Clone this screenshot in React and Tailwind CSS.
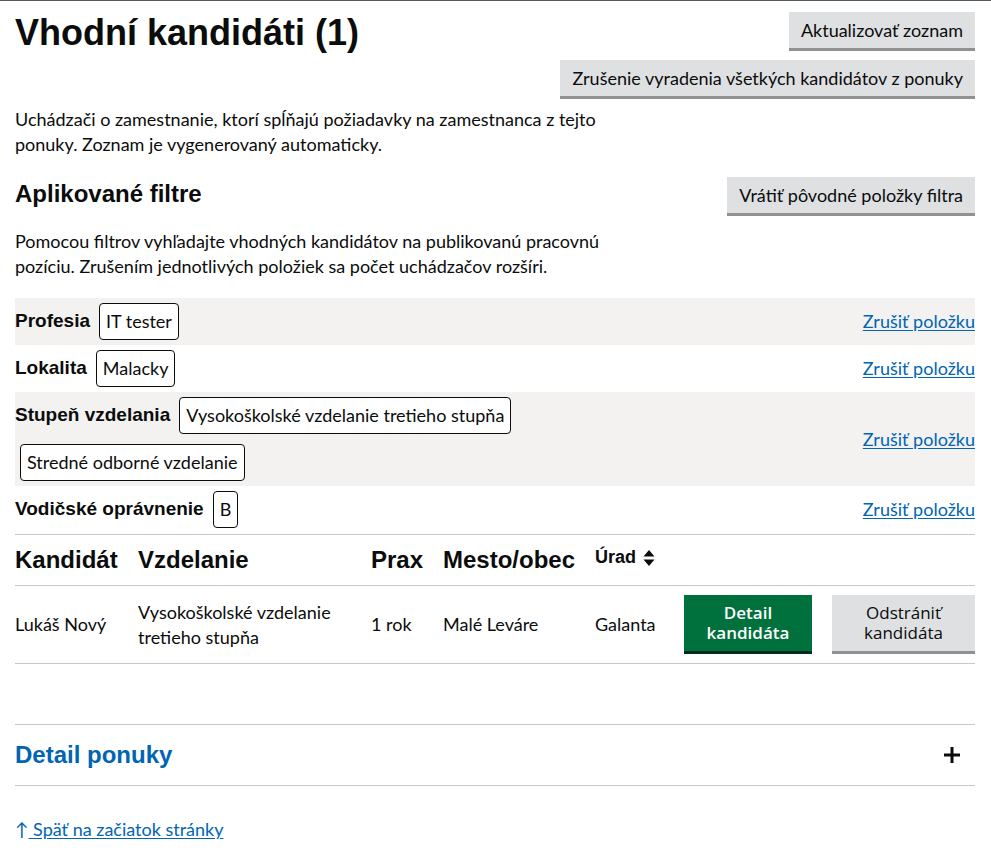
const FILTERS = [
  { label: 'Profesia', tags: ['IT tester'], shaded: true },
  { label: 'Lokalita', tags: ['Malacky'], shaded: false },
  { label: 'Stupeň vzdelania', tags: ['Vysokoškolské vzdelanie tretieho stupňa', 'Stredné odborné vzdelanie'], shaded: true },
  { label: 'Vodičské oprávnenie', tags: ['B'], shaded: false },
]

const body = "font-['Lato','Source_Sans_Pro',sans-serif]"
const head = "font-['Liberation_Sans',Arial,sans-serif]"

function GrayButton({ children, className = '' }) {
  return (
    <button className={`bg-[#dee0e2] border-b-[3px] border-[#929191] text-[#0b0c0c] text-[18px] leading-[22px] ${body} ${className}`}>
      {children}
    </button>
  )
}

export default function App() {
  return (
    <div className="min-h-screen bg-white border-t border-[#505a5f] text-[#0b0c0c]">
      <div className="pl-[15px] pr-[16px]">
        {/* Title + actions */}
        <div className="flex justify-between items-start">
          <h1 className={`${head} font-bold text-[36px] leading-[44px] pt-[10px]`}>Vhodní kandidáti (1)</h1>
          <div className="flex flex-col items-end gap-[9px] pt-[11px]">
            <GrayButton className="px-[12px] h-[39px]">Aktualizovať zoznam</GrayButton>
            <GrayButton className="px-[12px] h-[39px]">Zrušenie vyradenia všetkých kandidátov z ponuky</GrayButton>
          </div>
        </div>

        <p className={`${body} text-[18px] leading-[25px] max-w-[620px] mt-[8px]`}>
          Uchádzači o zamestnanie, ktorí spĺňajú požiadavky na zamestnanca z tejto ponuky. Zoznam je vygenerovaný automaticky.
        </p>

        {/* Applied filters */}
        <div className="flex justify-between items-start mt-[20px]">
          <h2 className={`${head} font-bold text-[24px] leading-[30px] pt-[2px]`}>Aplikované filtre</h2>
          <GrayButton className="px-[12px] h-[39px]">Vrátiť pôvodné položky filtra</GrayButton>
        </div>

        <p className={`${body} text-[18px] leading-[25px] max-w-[620px] mt-[13px]`}>
          Pomocou filtrov vyhľadajte vhodných kandidátov na publikovanú pracovnú pozíciu. Zrušením jednotlivých položiek sa počet uchádzačov rozšíri.
        </p>

        <div className="mt-[19px]">
          {FILTERS.map(f => (
            <div key={f.label} className={`flex items-center justify-between py-[5px] ${f.shaded ? 'bg-[#f3f2f1]' : ''}`}>
              <div className="flex flex-wrap items-center gap-y-[10px] max-w-[640px]">
                <span className={`${head} font-bold text-[19px] mr-[4px]`}>{f.label}</span>
                {f.tags.map(t => (
                  <span key={t} className={`${body} text-[18px] leading-[23px] border border-[#0b0c0c] rounded-[4px] px-[6px] py-[6px] ml-[5px] bg-white`}>
                    {t}
                  </span>
                ))}
              </div>
              <a href="#" className={`${body} text-[18px] text-[#0065b3] underline underline-offset-2`}>Zrušiť položku</a>
            </div>
          ))}
        </div>

        {/* Candidates table */}
        <div className="grid grid-cols-[123px_233px_72px_152px_89px_148px_143px] border-t border-b border-[#c8c8c8] mt-[1px]">
          <div className={`${head} font-bold text-[24px] h-[50px] flex items-center`}>Kandidát</div>
          <div className={`${head} font-bold text-[24px] h-[50px] flex items-center`}>Vzdelanie</div>
          <div className={`${head} font-bold text-[24px] h-[50px] flex items-center`}>Prax</div>
          <div className={`${head} font-bold text-[24px] h-[50px] flex items-center`}>Mesto/obec</div>
          <div className={`${head} font-bold text-[18px] h-[50px] flex items-center pb-[5px]`}>
            Úrad
            <svg width="12" height="18" viewBox="0 0 12 18" className="ml-[7px]">
              <path d="M6 1 L11.5 7.5 H0.5 Z M6 17 L11.5 10.5 H0.5 Z" fill="#0b0c0c" />
            </svg>
          </div>
          <div />
          <div />
          <div className={`${body} text-[18px] leading-[25px] col-span-7 grid grid-cols-subgrid border-t border-[#c8c8c8] h-[78px] items-center`}>
            <div>Lukáš Nový</div>
            <div>Vysokoškolské vzdelanie<br />tretieho stupňa</div>
            <div>1 rok</div>
            <div>Malé Leváre</div>
            <div>Galanta</div>
            <div>
              <button className="w-[128px] h-[59px] bg-[#00703c] border-b-[3px] border-[#002d18] text-white text-[17px] leading-[20px] font-['Open_Sans',sans-serif] font-semibold">
                Detail<br />kandidáta
              </button>
            </div>
            <div>
              <button className="w-[143px] h-[59px] bg-[#dee0e2] border-b-[3px] border-[#929191] text-[#0b0c0c] text-[17px] leading-[20px] font-['Open_Sans',sans-serif]">
                Odstrániť<br />kandidáta
              </button>
            </div>
          </div>
        </div>

        {/* Offer detail accordion */}
        <div className="mt-[60px] border-t border-b border-[#c8c8c8] h-[62px] flex items-center justify-between">
          <h2 className={`${head} font-bold text-[24px] text-[#0065b3]`}>Detail ponuky</h2>
          <svg width="16" height="16" viewBox="0 0 16 16" className="mr-[15px]">
            <path d="M6.5 0 H9.5 V6.5 H16 V9.5 H9.5 V16 H6.5 V9.5 H0 V6.5 H6.5 Z" fill="#0b0c0c" />
          </svg>
        </div>

        <div className={`${body} text-[18px] mt-[30px] pb-[20px] text-[#0065b3]`}>
          <a href="#" className="underline underline-offset-2">
            <span className="no-underline inline-block">↑</span> Späť na začiatok stránky
          </a>
        </div>
      </div>
    </div>
  )
}
